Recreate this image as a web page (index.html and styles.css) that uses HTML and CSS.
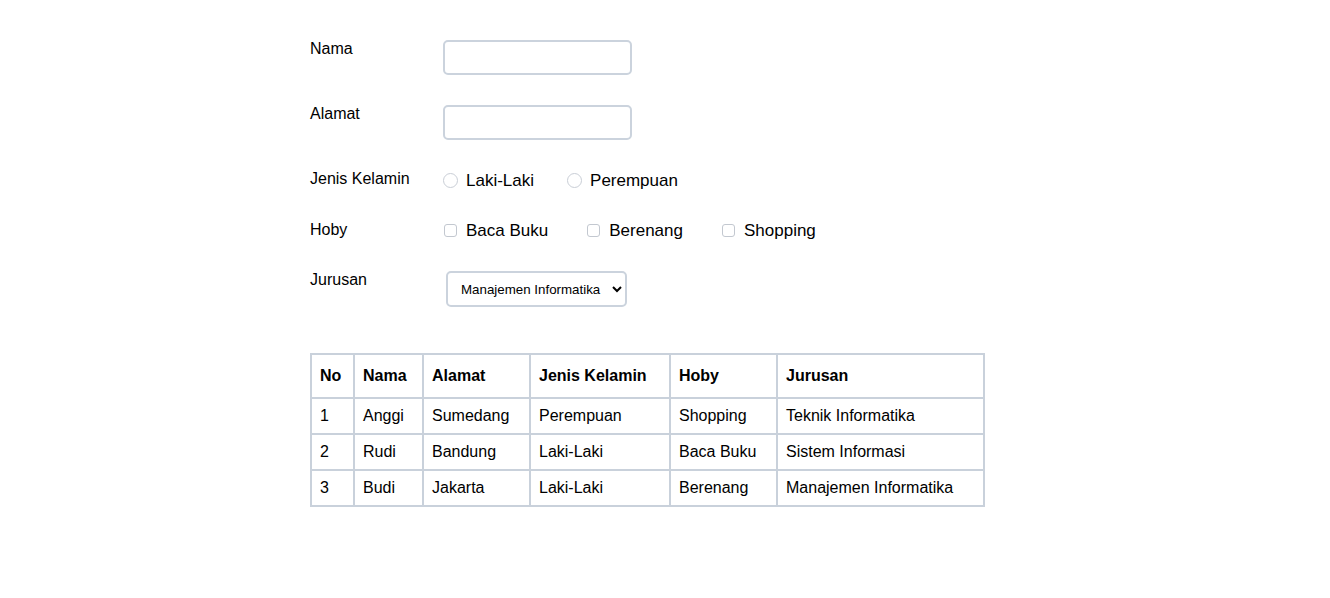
FILE: index.html
```html
<!DOCTYPE html>
<html lang="id">
<head>
<meta charset="utf-8">
<title>Form Mahasiswa</title>
<link rel="stylesheet" href="styles.css">
</head>
<body>
<main class="page">
  <form class="form">
    <label class="label" for="nama">Nama</label>
    <div class="field"><input class="text-input" id="nama" type="text"></div>

    <label class="label" for="alamat">Alamat</label>
    <div class="field"><input class="text-input" id="alamat" type="text"></div>

    <span class="label">Jenis Kelamin</span>
    <div class="field options">
      <label class="option option-radio"><input class="radio" type="radio" name="jk"><span class="option-text">Laki-Laki</span></label>
      <label class="option option-radio"><input class="radio" type="radio" name="jk"><span class="option-text">Perempuan</span></label>
    </div>

    <span class="label">Hoby</span>
    <div class="field options">
      <label class="option option-check"><input class="check" type="checkbox"><span class="option-text">Baca Buku</span></label>
      <label class="option option-check"><input class="check" type="checkbox"><span class="option-text">Berenang</span></label>
      <label class="option option-check"><input class="check" type="checkbox"><span class="option-text">Shopping</span></label>
    </div>

    <label class="label" for="jurusan">Jurusan</label>
    <div class="field">
      <select class="select" id="jurusan">
        <option>Manajemen Informatika</option>
        <option>Teknik Informatika</option>
        <option>Sistem Informasi</option>
      </select>
    </div>
  </form>

  <table class="data">
    <thead>
      <tr>
        <th class="c-no">No</th>
        <th class="c-nama">Nama</th>
        <th class="c-alamat">Alamat</th>
        <th class="c-jk">Jenis Kelamin</th>
        <th class="c-hoby">Hoby</th>
        <th class="c-jurusan">Jurusan</th>
      </tr>
    </thead>
    <tbody>
      <tr><td>1</td><td>Anggi</td><td>Sumedang</td><td>Perempuan</td><td>Shopping</td><td>Teknik Informatika</td></tr>
      <tr><td>2</td><td>Rudi</td><td>Bandung</td><td>Laki-Laki</td><td>Baca Buku</td><td>Sistem Informasi</td></tr>
      <tr><td>3</td><td>Budi</td><td>Jakarta</td><td>Laki-Laki</td><td>Berenang</td><td>Manajemen Informatika</td></tr>
    </tbody>
  </table>
</main>
</body>
</html>
```

FILE: styles.css
```css
html, body {
  margin: 0;
  padding: 0;
  background: #ffffff;
}

body {
  font-family: "Liberation Sans", Arial, sans-serif;
  font-size: 16px;
  color: #000000;
}

.page {
  padding: 40px 0 0 310px;
}

.form {
  display: grid;
  grid-template-columns: 133px auto;
  row-gap: 30px;
  align-items: start;
  justify-items: start;
}

.label {
  display: block;
  line-height: normal;
}

.field {
  display: flex;
  align-items: flex-start;
}

.text-input {
  box-sizing: border-box;
  width: 189px;
  height: 35px;
  margin: 0;
  border: 2px solid #cbd3dd;
  border-radius: 5px;
  background: #ffffff;
  padding: 4px 8px;
  font: inherit;
  outline: none;
}

.options {
  display: flex;
}

.option {
  display: flex;
  align-items: flex-start;
  line-height: normal;
}

.option-text {
  font-size: 17px;
  line-height: 21px;
}

.option-check .option-text {
  line-height: 20px;
}

.option-radio {
  margin-right: 33px;
}

.option-check {
  margin-right: 38px;
}

.radio {
  -webkit-appearance: none;
  appearance: none;
  box-sizing: border-box;
  width: 15px;
  height: 15px;
  margin: 3px 8px 3px 0;
  border: 1px solid #c9ced6;
  border-radius: 50%;
  background: #ffffff;
}

.check {
  -webkit-appearance: none;
  appearance: none;
  box-sizing: border-box;
  width: 13px;
  height: 13px;
  margin: 3px 9px 4px 1px;
  border: 1px solid #c3c8d0;
  border-radius: 3px;
  background: #ffffff;
}

.select {
  box-sizing: border-box;
  width: 181px;
  height: 36px;
  margin: 0 0 0 3px;
  border: 2px solid #cbd3dd;
  border-radius: 5px;
  background: #ffffff;
  padding: 0 6px 0 9px;
  font-family: "Liberation Sans", Arial, sans-serif;
  font-size: 13.33px;
  color: #000000;
  outline: none;
}

.data {
  margin-top: 46px;
  border-collapse: collapse;
  table-layout: fixed;
  width: 675px;
  border: 2px solid #c9d1db;
}

.data th,
.data td {
  border: 2px solid #c9d1db;
  text-align: left;
  line-height: normal;
  white-space: nowrap;
}

.data th {
  padding: 12px 8px;
  font-weight: bold;
}

.data td {
  padding: 8px 8px;
  font-weight: normal;
}

.c-no { width: 25px; }
.c-nama { width: 51px; }
.c-alamat { width: 89px; }
.c-jk { width: 122px; }
.c-hoby { width: 89px; }
.c-jurusan { width: 189px; }
```
